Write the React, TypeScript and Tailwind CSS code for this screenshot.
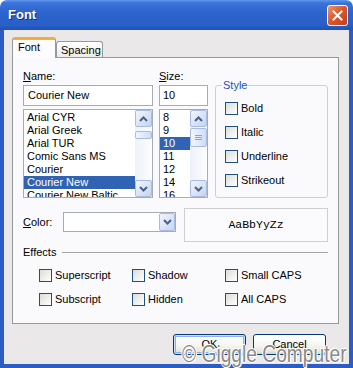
import React from "react";

const fontNames = [
  "Arial CYR",
  "Arial Greek",
  "Arial TUR",
  "Comic Sans MS",
  "Courier",
  "Courier New",
  "Courier New Baltic",
];
const sizes = ["8", "9", "10", "11", "12", "14", "16"];

function Chevron({ down }: { down?: boolean }) {
  return (
    <svg width="9" height="6" viewBox="0 0 9 6" className={down ? "rotate-180" : ""}>
      <path d="M1 5 L4.5 1.5 L8 5" fill="none" stroke="#4d6185" strokeWidth="2" />
    </svg>
  );
}

function ScrollButton({ down }: { down?: boolean }) {
  return (
    <div className="h-[17px] shrink-0 rounded-[2px] border border-[#a9bbdf] bg-[linear-gradient(135deg,#f2f6fe,#c5d4f0)] flex items-center justify-center">
      <Chevron down={down} />
    </div>
  );
}

function ScrollBar({ thumb, grip }: { thumb: string; grip?: boolean }) {
  return (
    <div className="w-[17px] shrink-0 flex flex-col bg-[linear-gradient(90deg,#eef1f9,#fdfdff)]">
      <ScrollButton />
      <div className="flex-1">
        <div
          className={`${thumb} rounded-[2px] border border-[#a9bbdf] bg-[linear-gradient(90deg,#f3f6fe,#cfdcf4)] flex flex-col items-center justify-center gap-[1px]`}
        >
          {grip &&
            [0, 1, 2].map((i) => (
              <span key={i} className="block w-[7px] h-[1px] bg-[#8ea3cf]" />
            ))}
        </div>
      </div>
      <ScrollButton down />
    </div>
  );
}

function ListBox({
  items,
  selected,
  width,
  thumb,
  grip,
}: {
  items: string[];
  selected: string;
  width: string;
  thumb: string;
  grip?: boolean;
}) {
  return (
    <div className={`${width} h-[89px] border border-[#a5acb2] bg-white flex`}>
      <div className="flex-1 overflow-hidden pt-[1px]">
        {items.map((it) => (
          <div
            key={it}
            className={`h-[13px] leading-[13px] pl-[3px] whitespace-nowrap ${
              it === selected ? "bg-[#3163b5] text-white" : ""
            }`}
          >
            {it}
          </div>
        ))}
      </div>
      <ScrollBar thumb={thumb} grip={grip} />
    </div>
  );
}

function CheckBox({ label }: { label: string }) {
  return (
    <div className="flex items-center gap-[3px] h-[13px]">
      <span className="w-[13px] h-[13px] shrink-0 border border-[#1c5180] bg-[linear-gradient(135deg,#dcdcd7,#ffffff)]" />
      <span className="leading-[13px] whitespace-nowrap">{label}</span>
    </div>
  );
}

function Button({ children, primary }: { children: React.ReactNode; primary?: boolean }) {
  return (
    <div
      className={`w-[73px] h-[21px] rounded-[3px] border border-[#003c74] bg-[linear-gradient(180deg,#ffffff_0%,#f5f5f1_55%,#e6e3da_88%,#d6d0c5_100%)] flex items-start justify-center pt-[3px] leading-[13px] ${
        primary ? "shadow-[inset_0_0_0_1px_#cde0fb,inset_0_0_0_2px_#8eaef0]" : ""
      }`}
    >
      {children}
    </div>
  );
}

export default function App() {
  return (
    <div className="w-[353px] h-[368px] relative overflow-hidden bg-white font-['Liberation_Sans',Arial,sans-serif] text-[11px] text-black select-none">
      <div className="h-full flex flex-col rounded-t-[7px] overflow-hidden">
        {/* Title bar */}
        <div className="h-[30px] shrink-0 flex items-center pl-[8px] pr-[5px] bg-[linear-gradient(180deg,#6196e8_0%,#3a74da_10%,#2d64cd_40%,#295ec7_85%,#1f50b5_100%)]">
          <span className="text-white font-bold text-[13px] [text-shadow:1px_1px_0_#0f2a7a]">Font</span>
          <div className="ml-auto w-[21px] h-[21px] rounded-[3px] border border-white bg-[linear-gradient(135deg,#ec9670_0%,#da5a30_45%,#c13f1b_100%)] flex items-center justify-center">
            <svg width="11" height="11" viewBox="0 0 11 11">
              <path d="M1.5 1.5 L9.5 9.5 M9.5 1.5 L1.5 9.5" stroke="white" strokeWidth="2" strokeLinecap="square" />
            </svg>
          </div>
        </div>

        {/* Body */}
        <div className="flex-1 flex flex-col border-x-4 border-b-4 border-[#2c5dc5] bg-[#ebe8e9] pt-[7px] pl-[8px] pr-[10px]">
          {/* Tabs */}
          <div className="h-[21px] -mb-px flex items-end relative z-10">
            <div className="w-[44px] h-[21px] border-x border-[#919b9c] border-t-[3px] border-t-[#f2ad3a] rounded-t-[3px] bg-[#fcfcfe] pl-[5px] pt-[1px] leading-[13px]">
              Font
            </div>
            <div className="w-[47px] h-[16px] mb-px border border-b-0 border-[#919b9c] rounded-t-[3px] bg-[linear-gradient(180deg,#ffffff,#ecebe6)] pl-[4px] pt-[2px] leading-[13px]">
              Spacing
            </div>
          </div>

          {/* Tab panel */}
          <div className="h-[267px] border border-[#919b9c] bg-[#fafafc] pt-[12px] pl-[10px] pr-[10px]">
            <div className="flex">
              {/* Name column */}
              <div className="w-[130px] flex flex-col">
                <div className="h-[13px] leading-[13px]">
                  <u>N</u>ame:
                </div>
                <div className="mt-[2px] h-[21px] border border-[#a5acb2] bg-white pl-[4px] flex items-center">
                  Courier New
                </div>
                <div className="mt-[3px]">
                  <ListBox items={fontNames} selected="Courier New" width="w-[130px]" thumb="mt-[4px] h-[8px]" />
                </div>
              </div>

              {/* Size column */}
              <div className="w-[49px] ml-[6px] flex flex-col">
                <div className="h-[13px] leading-[13px]">
                  <u>S</u>ize:
                </div>
                <div className="mt-[2px] h-[21px] border border-[#a5acb2] bg-white pl-[3px] flex items-center">
                  10
                </div>
                <div className="mt-[3px]">
                  <ListBox items={sizes} selected="10" width="w-[49px]" thumb="mt-[1px] h-[19px]" grip />
                </div>
              </div>

              {/* Style group */}
              <div className="relative ml-[7px] mt-[15px] w-[113px] h-[113px] rounded-[3px] border border-[#cfcfcb] pl-[9px] pt-[16px] flex flex-col gap-[11px]">
                <span className="absolute left-[6px] -top-[7px] px-[1px] bg-[#fafafc] leading-[13px] text-[#2150c0]">
                  Style
                </span>
                <CheckBox label="Bold" />
                <CheckBox label="Italic" />
                <CheckBox label="Underline" />
                <CheckBox label="Strikeout" />
              </div>
            </div>

            {/* Color + preview */}
            <div className="mt-[10px] flex items-start">
              <div className="w-[40px] mt-[8px] leading-[13px]">
                <u>C</u>olor:
              </div>
              <div className="mt-[4px] w-[113px] h-[20px] border border-[#a5acb2] bg-white flex justify-end">
                <div className="w-[16px] h-full rounded-[2px] border border-[#a9bbdf] bg-[linear-gradient(135deg,#f2f6fe,#c5d4f0)] flex items-center justify-center">
                  <Chevron down />
                </div>
              </div>
              <div className="ml-[8px] w-[144px] h-[34px] border border-[#cfcfcf] bg-[#fbfbfd] flex items-center justify-center font-['Liberation_Mono','Courier_New',monospace] text-[11.5px]">
                AaBbYyZz
              </div>
            </div>

            {/* Effects */}
            <div className="mt-[4px] h-[13px] flex items-center gap-[6px]">
              <span className="leading-[13px]">Effects</span>
              <span className="flex-1 h-px bg-[#a6a6a6]" />
            </div>
            <div className="mt-[10px] pl-[16px] grid grid-cols-[93px_93px_auto] gap-y-[11px]">
              <CheckBox label="Superscript" />
              <CheckBox label="Shadow" />
              <CheckBox label="Small CAPS" />
              <CheckBox label="Subscript" />
              <CheckBox label="Hidden" />
              <CheckBox label="All CAPS" />
            </div>
          </div>

          {/* Buttons */}
          <div className="mt-[10px] pr-[13px] flex justify-end gap-[7px]">
            <Button primary>OK</Button>
            <Button>Cancel</Button>
          </div>
        </div>
      </div>

      {/* Watermark */}
      <div className="absolute left-[182px] top-[342px] text-[24px] leading-none text-[#8a8a8a] whitespace-nowrap origin-left scale-x-[0.8] [text-shadow:1px_0_0_#fff,-1px_0_0_#fff,0_1px_0_#fff,0_-1px_0_#fff,1px_1px_0_#fff,-1px_-1px_0_#fff]">
        © Giggle Computer
      </div>
    </div>
  );
}
